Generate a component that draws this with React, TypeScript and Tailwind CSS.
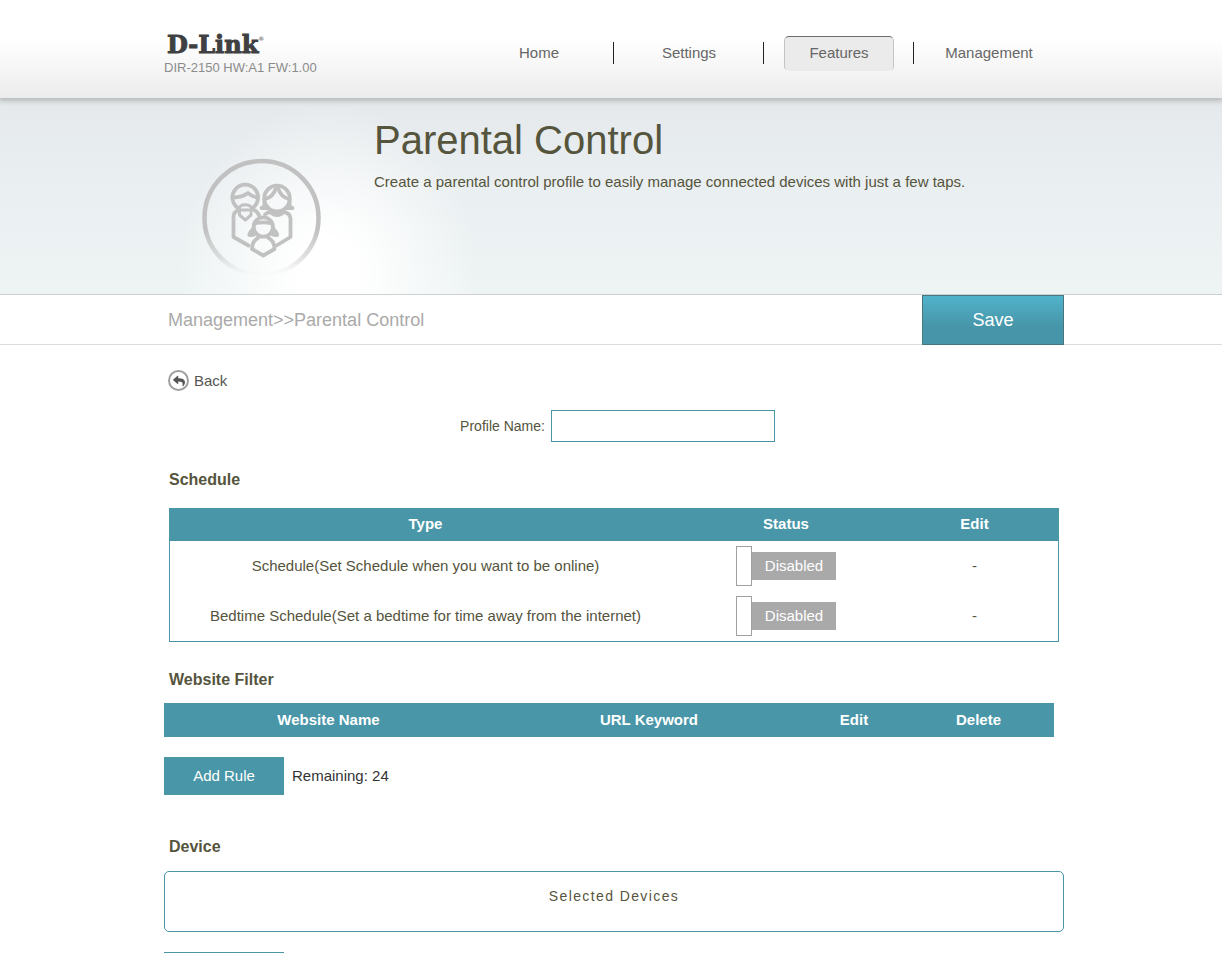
import { useState } from "react";
import { FaReply } from "react-icons/fa";

const navItems = ["Home", "Settings", "Features", "Management"];

const schedules = [
  { id: "schedule", label: "Schedule(Set Schedule when you want to be online)" },
  { id: "bedtime", label: "Bedtime Schedule(Set a bedtime for time away from the internet)" },
];

function FamilyIcon() {
  return (
    <svg className="h-30 w-30" viewBox="0 0 120 120" fill="none" aria-hidden="true">
      <defs>
        <linearGradient id="ring-fade" gradientUnits="userSpaceOnUse" x1="0" y1="0" x2="0" y2="120">
          <stop offset="0.6" stopColor="#c1c1c1" />
          <stop offset="0.82" stopColor="#c9c9c9" stopOpacity="0.6" />
          <stop offset="0.97" stopColor="#d5d5d5" stopOpacity="0" />
        </linearGradient>
      </defs>
      <circle cx="59.5" cy="60" r="57" stroke="url(#ring-fade)" strokeWidth="4.5" />
      <g stroke="#c1c1c1" strokeWidth="3.8" strokeLinecap="round" strokeLinejoin="round">
        {/* father */}
        <path d="M36 50A12.800 12.800 0 1 1 50.500 50" />
        <path d="M31 39.500C37 39.500 42 38 46 35C48.500 37.500 51.500 39 55.500 39.500" />
        <path strokeWidth="3" d="M37.500 49C39.500 46 47 46 49 49V57L43.300 62L37.500 57Z" />
        <path strokeWidth="3" d="M40 52H46.500" />
        <path d="M36 52.500C33 53.500 31.500 56 31.500 59V79L46.500 87.500" />
        <path d="M51 51.500C54 52.500 56 54.500 57 57.500" />
        {/* mother */}
        <circle cx="75" cy="40.500" r="12.800" />
        <path d="M62.500 41V46C62.500 48.500 61.500 50 59.500 50H66M87.500 41V46C87.500 48.500 88.500 50 90.500 50H84" />
        <path d="M63 41C68 40 72 36.500 74 30M76 30C78 36.500 82 40 87 41" />
        <path d="M69 54C72 58 78 58 81 54M69 54C66.500 54 64.500 55 63 56.500" />
        <path d="M81 54C86 54.500 88.500 57 88.500 61V79L74.500 87.500" />
        {/* child */}
        <circle cx="61.300" cy="69" r="9.600" />
        <path d="M52.500 65.500C58 64 64.500 64 70 65.500" />
        <path fill="#c1c1c1" d="M51 71C49.500 72.500 47.500 75 47.300 77C49.500 77.500 51.500 77 53 75.500M71.500 71C73 72.500 75 75 75.200 77C73 77.500 71 77 69.500 75.500" />
        <path d="M56 80C52 82 50 86 50 91L61.300 97.500L72.500 91C72.500 86 70.500 82 66.500 80" />
      </g>
    </svg>
  );
}

function StatusToggle({ id, label }: { id: string; label: string }) {
  const [enabled, setEnabled] = useState(false);

  return (
    <label htmlFor={id} className="mx-auto flex h-10 w-25 cursor-pointer items-center">
      <input
        id={id}
        type="checkbox"
        aria-label={label}
        checked={enabled}
        onChange={(e) => setEnabled(e.target.checked)}
        className={`h-10 w-4 shrink-0 appearance-none border border-[#a0a0a0] bg-white ${enabled ? "order-2" : ""}`}
      />
      <span className={`h-7 flex-1 text-center leading-7 text-white ${enabled ? "bg-[#4896a8]" : "bg-[#a9a9a9]"}`}>
        {enabled ? "Enabled" : "Disabled"}
      </span>
    </label>
  );
}

export default function App() {
  const [profileName, setProfileName] = useState("");

  return (
    <div className="min-h-screen bg-white font-['Liberation_Sans',Arial,sans-serif] text-[15px] leading-5 text-[#55543c]">
      {/* Header */}
      <header className="relative bg-linear-to-b from-white from-40% to-[#ececec] shadow-[0_2px_5px_1px_#b4b9b9]">
        <div className="mx-auto flex h-[98px] max-w-[906px] justify-between pl-[6px]">
          <div className="pt-[33px]">
            <div className="flex items-start pl-[3px] font-['DejaVu_Serif',serif] text-2xl leading-6 font-bold text-[#3f4042] [-webkit-text-stroke:1px_#3f4042]">
              D-Link
              <span className="text-[6px] leading-3 font-normal [-webkit-text-stroke:0]">®</span>
            </div>
            <p className="text-[13px] leading-[22px] text-[#8c8c8c]">DIR-2150 HW:A1 FW:1.00</p>
          </div>
          <nav className="flex pt-9">
            {navItems.map((item, i) => (
              <div key={item} className="relative flex h-[35px] w-[150px] justify-center">
                {i > 0 && <span className="absolute top-[6px] -left-px h-[22px] w-px bg-[#222]" />}
                <a
                  href="#"
                  className={
                    item === "Features"
                      ? "w-[110px] rounded-[5px] border border-[#c4c4c4] border-t-[#6e6e6e] border-b-[#ececec] bg-[#ebebeb] text-center leading-8 text-[#666]"
                      : "pt-px leading-8 text-[#666]"
                  }
                >
                  {item}
                </a>
              </div>
            ))}
          </nav>
        </div>
      </header>

      {/* Banner */}
      <section className="border-b border-[#cdd1d1] bg-linear-to-b from-[#e5e9eb] via-[#eaeff1] to-[#eef4f4]">
        <div className="mx-auto flex h-49 max-w-[906px] bg-[radial-gradient(ellipse_150px_170px_at_170px_175px,#fff_20%,transparent)] pl-[6px]">
          <div className="w-[210px] shrink-0 pt-15 pl-[38px]">
            <FamilyIcon />
          </div>
          <div className="pt-4">
            <h1 className="text-[40px] leading-13">Parental Control</h1>
            <p className="pt-[6px]">
              Create a parental control profile to easily manage connected devices with just a few taps.
            </p>
          </div>
        </div>
      </section>

      {/* Breadcrumb */}
      <div className="border-b border-[#dcdcdc]">
        <div className="mx-auto flex h-[49px] max-w-[906px] items-start justify-between pl-[10px]">
          <p className="text-lg leading-[50px] text-[#aaa]">Management&gt;&gt;Parental Control</p>
          <button className="h-[50px] w-[142px] shrink-0 border border-[#48767f] bg-linear-to-b from-[#50b3cb] to-[#4795a8] to-65% text-lg text-white">
            Save
          </button>
        </div>
      </div>

      <main className="mx-auto max-w-[906px] pl-[6px]">
        <a href="#" className="ml-1 mt-[25px] inline-flex items-center gap-[5px] text-[#555]">
          <span className="flex h-[21px] w-[21px] items-center justify-center rounded-full border-2 border-[#a0a0a0]">
            <FaReply className="h-3 w-3 text-[#555]" />
          </span>
          Back
        </a>

        <div className="mt-[18px] flex items-center justify-center gap-[6px] pl-[7px]">
          <label htmlFor="profile-name" className="text-sm">
            Profile Name:
          </label>
          <input
            id="profile-name"
            type="text"
            value={profileName}
            onChange={(e) => setProfileName(e.target.value)}
            className="h-8 w-56 border border-[#4896a8] px-2"
          />
        </div>

        {/* Schedule */}
        <h2 className="mt-7 pl-[5px] text-base leading-5 font-bold">Schedule</h2>
        <div className="mt-[18px] px-[5px]">
          <table className="w-full table-fixed border-separate border-spacing-0 border border-t-0 border-[#4896a8] text-center">
            <thead>
              <tr className="h-[33px] bg-[#4896a8] text-white">
                <th className="w-[511px]">Type</th>
                <th className="w-[210px]">Status</th>
                <th>Edit</th>
              </tr>
            </thead>
            <tbody>
              {schedules.map((row) => (
                <tr key={row.id} className="h-[50px]">
                  <td>{row.label}</td>
                  <td>
                    <StatusToggle id={row.id} label={row.label} />
                  </td>
                  <td>-</td>
                </tr>
              ))}
            </tbody>
          </table>
        </div>

        {/* Website filter */}
        <h2 className="mt-7 pl-[5px] text-base leading-5 font-bold">Website Filter</h2>
        <div className="mt-[13px] pr-[10px]">
          <table className="w-full table-fixed border-collapse text-center">
            <thead>
              <tr className="h-[34px] bg-[#4896a8] text-white">
                <th className="w-[329px]">Website Name</th>
                <th className="w-[312px]">URL Keyword</th>
                <th className="w-[98px]">Edit</th>
                <th>Delete</th>
              </tr>
            </thead>
          </table>
        </div>
        <div className="mt-5 flex items-center gap-2">
          <button className="h-[38px] w-30 bg-[#4896a8] text-white">Add Rule</button>
          <span className="text-[#333]">Remaining: 24</span>
        </div>

        {/* Device */}
        <h2 className="mt-[42px] pl-[5px] text-base leading-5 font-bold">Device</h2>
        <div className="mt-[14px] h-[61px] rounded-[5px] border border-[#4896a8] pt-[14px] text-center text-sm tracking-widest">
          Selected Devices
        </div>
        <button aria-label="Add device" className="mt-5 block h-[38px] w-30 bg-[#4896a8] text-white" />
      </main>
    </div>
  );
}
